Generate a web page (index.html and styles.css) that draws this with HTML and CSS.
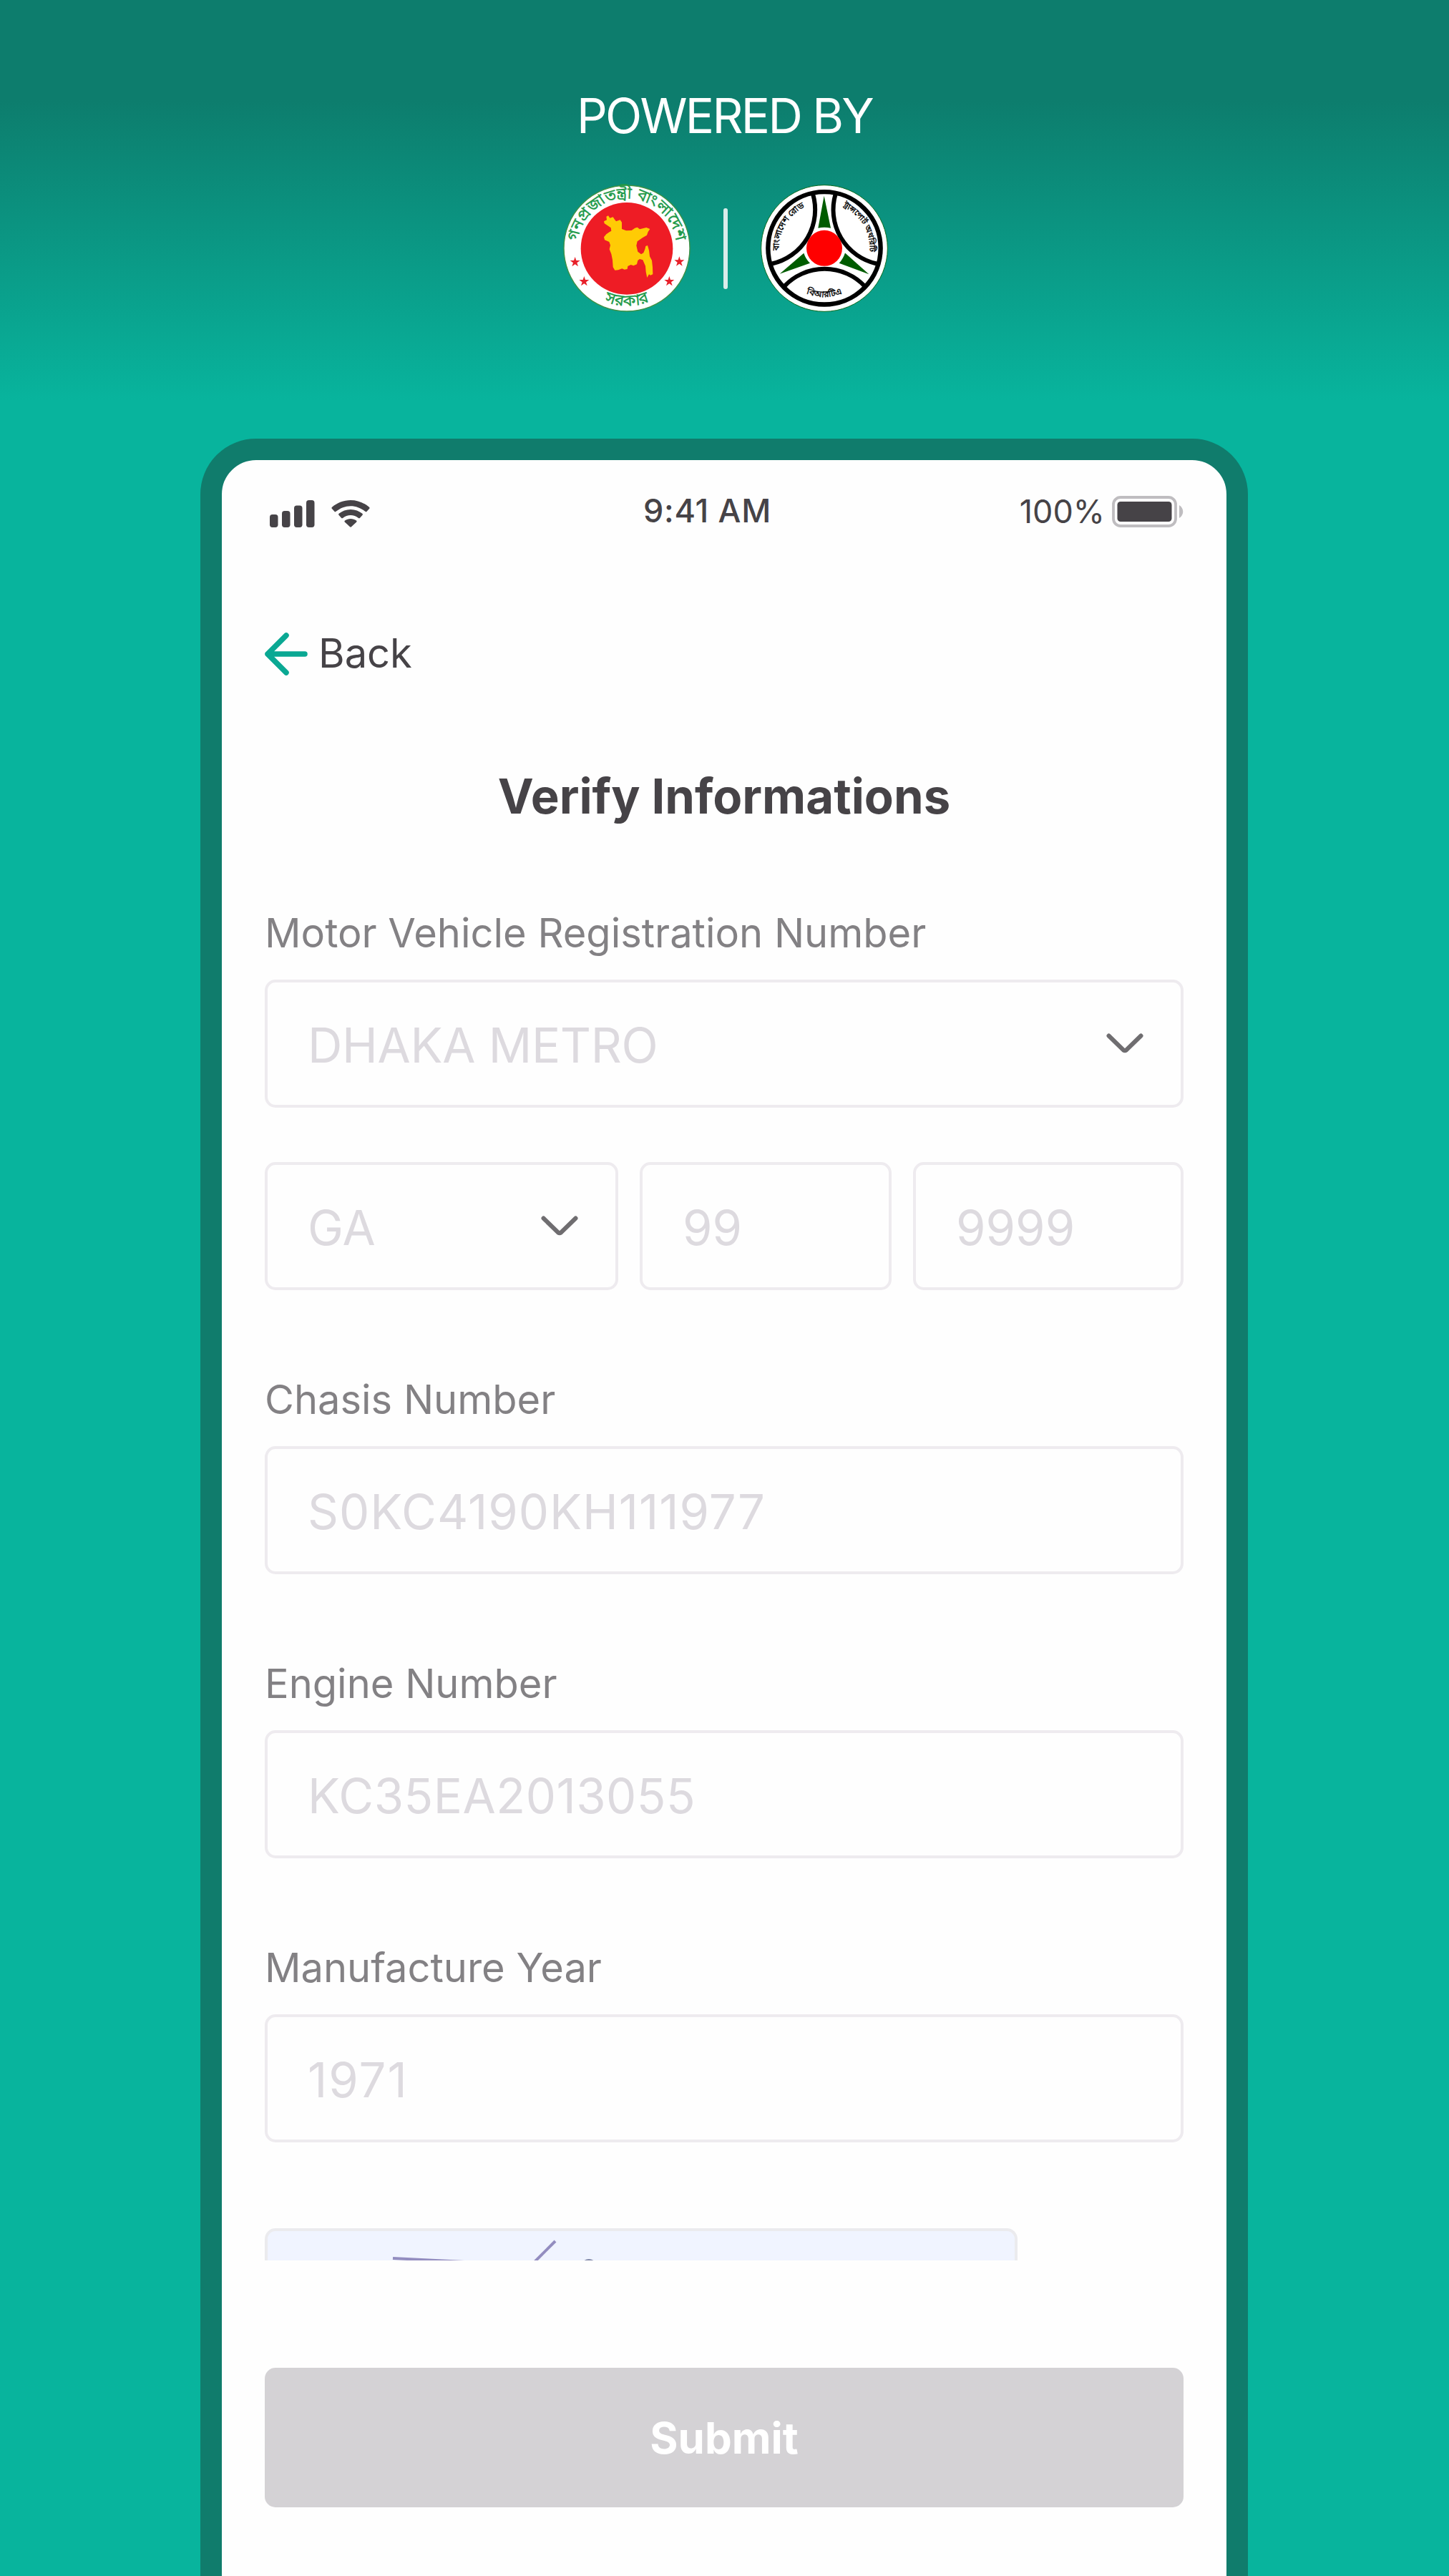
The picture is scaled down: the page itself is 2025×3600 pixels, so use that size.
FILE: index.html
```html
<!DOCTYPE html>
<html lang="en">
<head>
    <meta charset="UTF-8">
    <meta name="viewport" content="width=device-width, initial-scale=1.0">
    <title>Verify Informations</title>
    <link rel="stylesheet" href="styles.css">
</head>
<body>
    <header class="header">
        <div class="powered">POWERED BY</div>
        <div class="logos">
            <!-- Government seal -->
            <svg class="logo" viewBox="78 51 540 540">
                <defs>
                    <path id="gov-top" d="M140 321 A208 208 0 0 1 556 321"/>
                    <path id="gov-bottom" d="M106 321 A242 242 0 0 0 590 321"/>
                    <path id="star" d="M0 -22 L5 -7 L21 -7 L8 3 L13 18 L0 9 L-13 18 L-8 3 L-21 -7 L-5 -7 Z"/>
                </defs>
                <circle cx="348" cy="321" r="264" fill="#fff" stroke="#3f9142" stroke-width="4"/>
                <circle cx="348" cy="322" r="193" fill="#ee1c25"/>
                <path fill="#ffcb05" d="M262 188 L270 184 L277 194 L290 190 L297 200 L303 208 L320 202 L327 212 L327 240 L345 247 L368 246 L382 236 L392 233 L402 241 L430 234 L445 240 L437 252 L432 266 L415 276 L392 292 L388 310 L394 335 L408 346 L418 340 L424 325 L427 312 L435 309 L441 330 L444 355 L453 372 L456 400 L457 430 L447 434 L441 430 L433 444 L428 420 L426 395 L415 370 L402 366 L394 372 L390 388 L376 394 L365 390 L352 396 L350 408 L338 410 L328 406 L312 412 L298 413 L290 400 L288 370 L283 345 L275 325 L279 308 L274 294 L255 286 L252 274 L262 262 L275 253 L283 248 L281 235 L254 217 L252 208 L264 202 Z"/>
                <g fill="#e8202a">
                    <use href="#star" x="131" y="379"/>
                    <use href="#star" x="169" y="460"/>
                    <use href="#star" x="568" y="377"/>
                    <use href="#star" x="526" y="460"/>
                </g>
                <text class="gov-text"><textPath href="#gov-top" startOffset="50%">গনপ্রজাতন্ত্রী বাংলাদেশ</textPath></text>
                <text class="gov-text"><textPath href="#gov-bottom" startOffset="50%">সরকার</textPath></text>
            </svg>
            <div class="divider"></div>
            <!-- BRTA seal -->
            <svg class="logo" viewBox="95 52.5 540 540">
                <defs>
                    <path id="brta-top" d="M186.500 387 A190 190 0 1 1 543.500 387"/>
                    <path id="brta-bottom" d="M160 322 A205 205 0 0 0 570 322"/>
                </defs>
                <circle cx="365" cy="322.5" r="265" fill="#fff" stroke="#0a6b1c" stroke-width="3"/>
                <g fill="none" stroke="#000">
                    <circle cx="365" cy="322" r="236" stroke-width="19"/>
                    <path stroke-width="18" d="M317 95 A232 232 0 0 1 146 387"/>
                    <path stroke-width="18" d="M412 95 A232 232 0 0 0 584 387"/>
                    <path stroke-width="18" d="M198 481 A232 232 0 0 1 534 481"/>
                </g>
                <g fill="#005c00">
                    <path d="M364 103 L392 238 Q365 232 339 238 Z"/>
                    <path d="M178 430 L279 343 Q287 368 305 385 Z"/>
                    <path d="M552 431 L452 342 Q443 368 427 385 Z"/>
                </g>
                <circle cx="365" cy="322" r="75" fill="#f00"/>
                <text class="brta-text"><textPath href="#brta-top" startOffset="23%">বাংলাদেশ রোড</textPath></text>
                <text class="brta-text brta-small"><textPath href="#brta-top" startOffset="77%">ট্রান্সপোর্ট অথরিটি</textPath></text>
                <text class="brta-text"><textPath href="#brta-bottom" startOffset="50%">বিআরটিএ</textPath></text>
            </svg>
        </div>
    </header>

    <main class="phone">
        <div class="status-bar">
            <div class="status-left">
                <svg width="63" height="38" viewBox="0 0 63 38" fill="#464347">
                    <rect x="0" y="20" width="11.5" height="18" rx="3.7"/>
                    <rect x="17" y="15" width="11.5" height="23" rx="3.7"/>
                    <rect x="34" y="7.5" width="11.5" height="30.5" rx="3.7"/>
                    <rect x="51" y="0" width="11.5" height="38" rx="3.7"/>
                </svg>
                <svg width="54" height="38" viewBox="0 0 54 38" fill="#464347">
                    <path d="M27 0 C36.5 0 46 3.6 53 9.8 Q54 10.8 53.2 11.8 L49.6 15.8 Q48.6 16.8 47.5 15.8 C41.5 11 34.5 8.2 27 8.2 C19.5 8.2 12.5 11 6.5 15.8 Q5.4 16.8 4.4 15.8 L0.8 11.8 Q0 10.8 1 9.8 C8 3.6 17.5 0 27 0 Z"/>
                    <path d="M27 12.9 C33.2 12.9 39 15 43.4 18.8 Q44.4 19.7 43.6 20.7 L40 24.8 Q39 25.8 38 25 C34.8 22.4 31 21 27 21 C23 21 19.2 22.4 16 25 Q15 25.8 14 24.8 L10.4 20.7 Q9.6 19.7 10.6 18.8 C15 15 20.8 12.9 27 12.9 Z"/>
                    <path d="M27 26 C30 26 32.7 27 35 28.6 Q36 29.4 35.2 30.4 L28 37.3 Q27 38.2 26 37.3 L18.8 30.4 Q18 29.4 19 28.6 C21.3 27 24 26 27 26 Z"/>
                </svg>
            </div>
            <div class="time">9:41 AM</div>
            <div class="status-right">
                <span>100%</span>
                <svg width="100" height="44" viewBox="0 0 100 44">
                    <rect x="2" y="2" width="87" height="40" rx="10" fill="none" stroke="#bfbdc0" stroke-width="3.8"/>
                    <rect x="7.500" y="8" width="76" height="28" rx="4.5" fill="#464347"/>
                    <path d="M94 13 C101 17 101 27 94 31 Z" fill="#bfbdc0"/>
                </svg>
            </div>
        </div>

        <div class="back">
            <svg width="60" height="60" viewBox="0 0 60 60" fill="none" stroke="#0aa893" stroke-width="7.5" stroke-linecap="round" stroke-linejoin="round">
                <path d="M30 4 L4 30 L30 56 M4 30 H56"/>
            </svg>
            <span>Back</span>
        </div>

        <h1>Verify Informations</h1>

        <div class="form-group">
            <div class="label">Motor Vehicle Registration Number</div>
            <div class="field district">
                DHAKA METRO
                <svg class="chevron" viewBox="0 0 52 28"><path d="M3.500 3.500 L24 23.500 Q26 25 28 23.500 L48.500 3.500"/></svg>
            </div>
            <div class="field-row">
                <div class="field">
                    GA
                    <svg class="chevron" viewBox="0 0 52 28"><path d="M3.500 3.500 L24 23.500 Q26 25 28 23.500 L48.500 3.500"/></svg>
                </div>
                <div class="field">99</div>
                <div class="field">9999</div>
            </div>
        </div>

        <div class="form-group">
            <div class="label">Chasis Number</div>
            <div class="field chasis">S0KC4190KH111977</div>
        </div>

        <div class="form-group">
            <div class="label">Engine Number</div>
            <div class="field engine">KC35EA2013055</div>
        </div>

        <div class="form-group">
            <div class="label">Manufacture Year</div>
            <div class="field year">1971</div>
        </div>

        <!-- captcha, cut off by the scroll area -->
        <div class="captcha">
            <svg width="1044" height="42" viewBox="0 0 1044 42" fill="none" stroke="#938dc0" stroke-width="4">
                <path d="M175 38 L275 43"/>
                <path d="M370 46 L402 14"/>
                <path d="M438 48 Q449 34 460 48" stroke="#7f86a6"/>
            </svg>
        </div>

        <button class="btn">Submit</button>
    </main>
</body>
</html>
```
FILE: styles.css
```css
* {
    box-sizing: border-box;
}

body {
    margin: 0;
    height: 3600px;
    overflow: hidden;
    font-family: Inter, "Noto Sans", sans-serif;
    background: linear-gradient(to bottom, #0d7d6d 0, #0d7d6d 140px, #08b49d 560px);
    color: #464347;
}

.header {
    height: 613px;
    padding-top: 121px;
}

.powered {
    height: 82px;
    line-height: 82px;
    font-size: 67px;
    letter-spacing: -2.7px;
    text-align: center;
    color: #fff;
}

.logos {
    display: flex;
    justify-content: center;
    align-items: center;
    gap: 45px;
    margin-top: 54px;
    padding-left: 3px;
}

.logo {
    width: 180px;
    height: 180px;
}

.gov-text {
    font-family: "Noto Sans Bengali", "Noto Sans", sans-serif;
    font-size: 67px;
    text-anchor: middle;
    fill: #1f9a4a;
    stroke: #1f9a4a;
    stroke-width: 1;
}

.brta-text {
    font-family: "Noto Sans Bengali", "Noto Sans", sans-serif;
    font-size: 37px;
    text-anchor: middle;
    fill: #000;
    stroke: #000;
    stroke-width: 1;
}

.brta-small {
    font-size: 34px;
}

.divider {
    width: 6px;
    height: 113px;
    border-radius: 3px;
    background: #d9ecea;
}

.phone {
    width: 1464px;
    height: 3100px;
    margin-left: 280px;
    padding: 43px 60px 0;
    border: 30px solid #107c6c;
    border-radius: 78px 78px 0 0;
    background: #fefefe;
}

.status-bar {
    display: flex;
    align-items: center;
    height: 54px;
    padding-left: 7px;
    font-size: 45px;
    line-height: 54px;
}

.status-left,
.status-right {
    display: flex;
    align-items: center;
}

.status-left {
    gap: 23px;
    width: 522px;
    padding-top: 9px;
}

.status-right {
    gap: 10px;
    margin-left: auto;
    padding-top: 3px;
}

.time {
    padding-top: 1px;
    font-weight: 500;
    letter-spacing: 0.7px;
}

.back {
    display: flex;
    align-items: center;
    gap: 15px;
    height: 68px;
    margin-top: 139px;
    font-size: 56px;
}

.back svg {
    margin-top: 2px;
}

h1 {
    margin: 127px 0 -1px;
    font-size: 67px;
    line-height: 78px;
    font-weight: 700;
    text-align: center;
}

.form-group {
    margin-top: 118px;
}

.label {
    margin-bottom: 30px;
    font-size: 56px;
    line-height: 70px;
    color: #838184;
}

.field {
    display: flex;
    align-items: center;
    justify-content: space-between;
    height: 179px;
    padding: 3px 52px 0 56px;
    border: 4px solid #eeebef;
    border-radius: 15px;
    font-size: 67px;
    color: #dddadf;
}

.district {
    letter-spacing: -0.3px;
}

.chasis {
    letter-spacing: 1px;
}

.engine {
    letter-spacing: 0.5px;
}

.year {
    letter-spacing: 2px;
}

.field-row {
    display: grid;
    grid-template-columns: 494px 352px 1fr;
    gap: 30px;
    margin-top: 76px;
}

.chevron {
    width: 52px;
    height: 28px;
    margin-top: -4px;
    fill: none;
    stroke: #6f6d70;
    stroke-width: 6;
    stroke-linecap: round;
}

.captcha {
    width: 1052px;
    height: 45px;
    margin-top: 120px;
    border: 4px solid #ebebee;
    border-bottom: none;
    border-radius: 15px 15px 0 0;
    background: #f0f4ff;
    overflow: hidden;
}

.btn {
    display: block;
    width: 100%;
    height: 195px;
    margin-top: 150px;
    border: none;
    border-radius: 15px;
    background: #d4d2d5;
    color: #fff;
    font-family: inherit;
    font-size: 60px;
    font-weight: 700;
}
```
